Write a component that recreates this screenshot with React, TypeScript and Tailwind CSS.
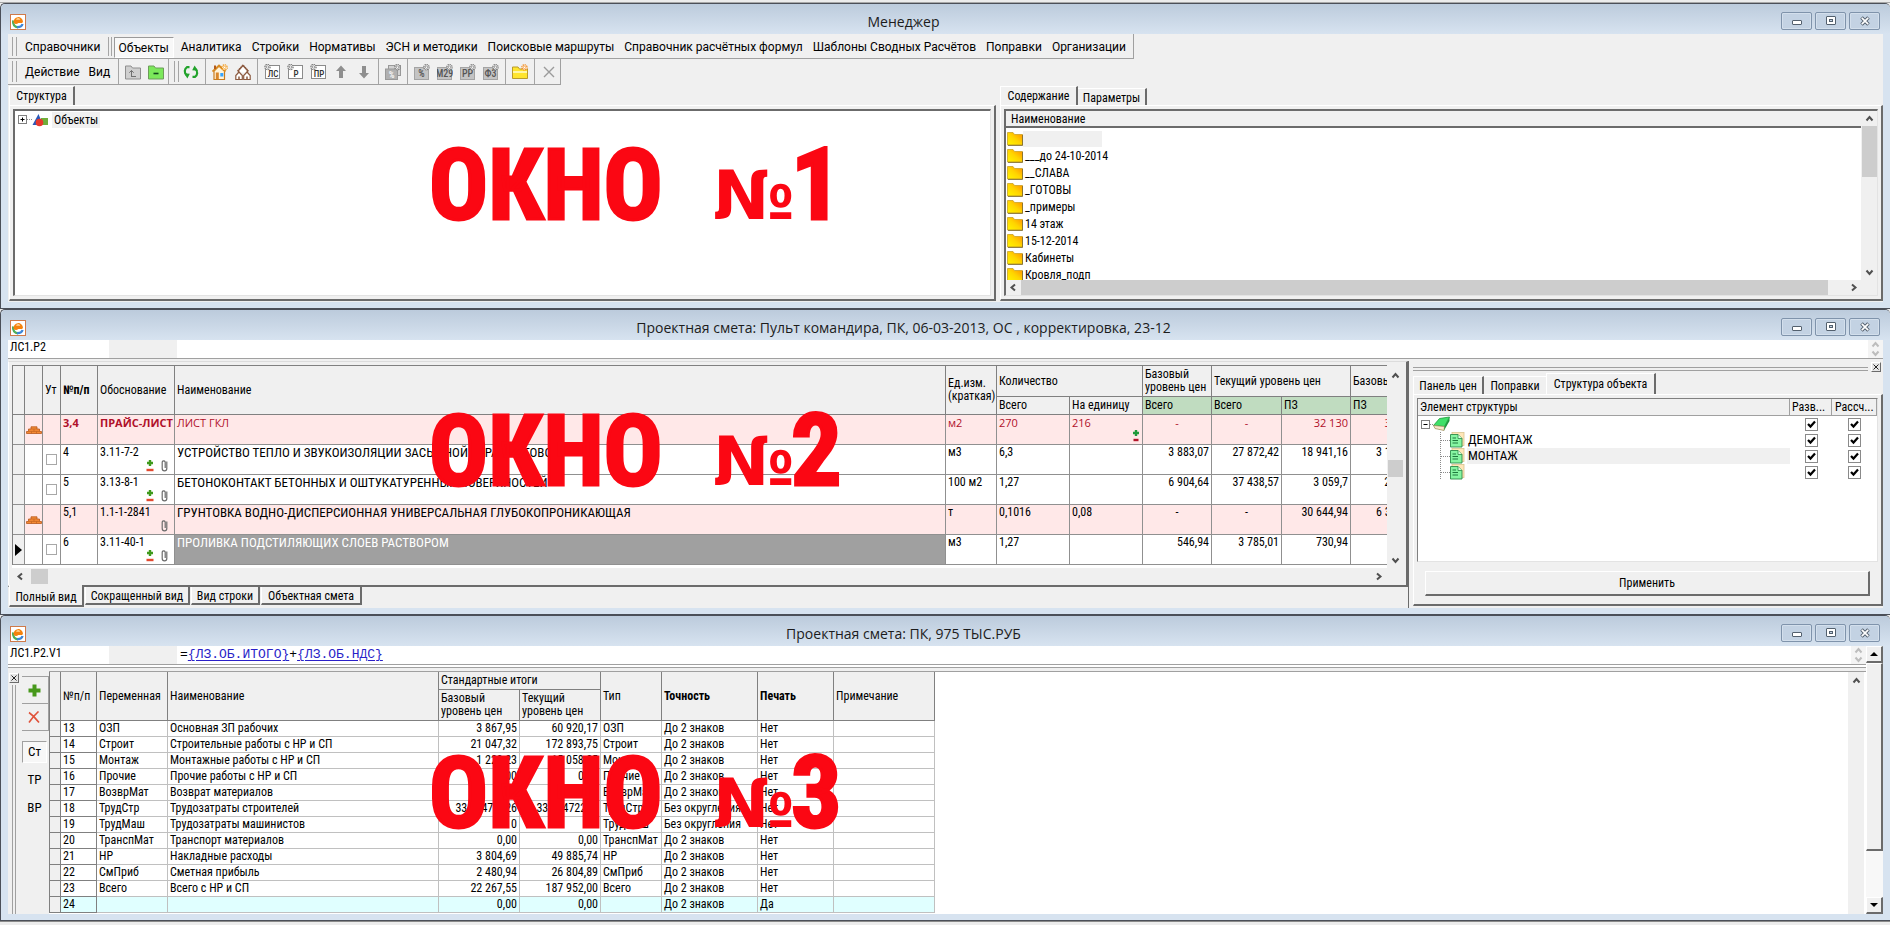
import React from "react";

/* ---------- shared helpers ---------- */

const UI = "font-['Roboto_Condensed',Roboto,'Liberation_Sans',sans-serif]";
const MENU = "font-[Roboto,'Open_Sans','Liberation_Sans',sans-serif]";
const sunken = "border border-[#808080] border-r-[#e3e3e3] border-b-[#e3e3e3]";

type Dir = "up" | "down" | "left" | "right";

function Chevron({ dir, color = "#505050" }: { dir: Dir; color?: string }) {
  const d = {
    up: "M1.5 6.5 L4.5 3 L7.5 6.5",
    down: "M1.5 2.5 L4.5 6 L7.5 2.5",
    left: "M6 1.5 L2.5 4.5 L6 7.5",
    right: "M3 1.5 L6.5 4.5 L3 7.5",
  }[dir];
  return (
    <svg width="9" height="9" viewBox="0 0 9 9" aria-hidden="true">
      <path d={d} fill="none" stroke={color} strokeWidth="2" />
    </svg>
  );
}

function ArrowButton({ dir, label }: { dir: Dir; label: string }) {
  return (
    <button aria-label={label} className="flex h-[15px] w-[15px] shrink-0 items-center justify-center bg-[#f0f0f0]">
      <Chevron dir={dir} />
    </button>
  );
}

function Gear({ x, y, color = "#777" }: { x: number; y: number; color?: string }) {
  return (
    <g>
      <circle cx={x} cy={y} r="2.6" fill="#fff" stroke={color} strokeWidth="1.3" strokeDasharray="1.3 0.7" />
      <circle cx={x} cy={y} r="1.2" fill="none" stroke={color} strokeWidth="0.7" />
    </g>
  );
}

/* ---------- window chrome ---------- */

function AppIcon() {
  return (
    <svg width="16" height="16" viewBox="0 0 16 16" aria-hidden="true" className="shrink-0">
      <rect x="0.5" y="0.5" width="15" height="15" fill="#fff" stroke="#cf7a4a" />
      <path d="M3.2 6.5 C2.6 10.5 4.6 13.2 8 13.2" fill="none" stroke="#4fae5b" strokeWidth="2.4" />
      <path d="M7 13.2 C10 13.4 12 12 12.6 10" fill="none" stroke="#3c86d8" strokeWidth="2.2" />
      <path d="M3.5 8.4 A4.7 4.7 0 1 1 13 7.4 L12.2 9 H8.4 A3.4 3.4 0 0 1 3.5 8.4 Z" fill="#f5820c" />
      <path d="M6 5.8 A2.2 2.2 0 0 1 10.3 5.8 Z" fill="#ffd79a" />
    </svg>
  );
}

function CaptionButton({ label, children }: { label: string; children: React.ReactNode }) {
  return (
    <button
      aria-label={label}
      className="flex h-[18px] w-[31px] items-center justify-center rounded-[2px] border border-[#7f93ab] bg-[#c3d2e3] shadow-[inset_0_0_0_1px_#d3dfec]"
    >
      <svg width="12" height="10" viewBox="0 0 12 10" aria-hidden="true">{children}</svg>
    </button>
  );
}

function Win({ title, mark, markTop, children }: { title: string; mark: string; markTop: string; children: React.ReactNode }) {
  return (
    <section className="relative flex flex-[1_1_0px] flex-col rounded-t-[5px] border-t border-b border-l border-[#4b4f58] bg-[#d7e3f0] pr-[7px] pb-[6px] pl-[7px]">
      <header className="-mx-[7px] flex h-[30px] shrink-0 items-center rounded-t-[5px] bg-linear-to-b from-[#bccbdc] to-[#d7e3f0] pt-[6px] pr-[10px] pl-[9px]">
        <AppIcon />
        <h1 className="flex-1 text-center font-['Open_Sans','Noto_Sans',sans-serif] text-[14px] leading-[20px] whitespace-nowrap text-[#1c1c1c]">{title}</h1>
        <div className="mb-[2px] flex gap-[3px]">
          <CaptionButton label="Свернуть">
            <rect x="1.5" y="4.5" width="9" height="4" rx="0.5" fill="#fff" stroke="#53606e" />
          </CaptionButton>
          <CaptionButton label="Развернуть">
            <rect x="1.5" y="0.5" width="9" height="8" rx="0.5" fill="#fff" stroke="#53606e" />
            <rect x="4.5" y="3.5" width="3" height="2" fill="#c3d2e3" stroke="#53606e" />
          </CaptionButton>
          <CaptionButton label="Закрыть">
            <path d="M2.5 1.5 L9.5 8.5 M9.5 1.5 L2.5 8.5" stroke="#53606e" strokeWidth="3.6" />
            <path d="M2.8 1.8 L9.2 8.2 M9.2 1.8 L2.8 8.2" stroke="#fff" strokeWidth="1.7" />
          </CaptionButton>
        </div>
      </header>
      <div className="flex min-h-0 flex-1 flex-col bg-[#f0f0f0]">{children}</div>
      <div
        className={`pointer-events-none absolute left-[428px] flex items-baseline leading-[100px] font-bold whitespace-nowrap text-[#fb0713] ${markTop}`}
      >
        <span className={`w-[284px] text-[98px] [-webkit-text-stroke:3px_#fb0713] ${UI}`}>ОКНО</span>
        <span className="w-[78px] font-['DejaVu_Sans',sans-serif] text-[68px]">№</span>
        <span className={`text-[100px] [-webkit-text-stroke:3px_#fb0713] ${UI}`}>{mark}</span>
      </div>
    </section>
  );
}

function Grip({ tight }: { tight?: boolean }) {
  return <span className={`my-[2px] ml-[4px] w-[5px] shrink-0 self-stretch border-x border-[#a5a5a5] ${tight ? "" : "mr-[4px]"}`} />;
}

function VLine({ tight }: { tight?: boolean }) {
  return <span className={`w-px shrink-0 self-stretch bg-[#a5a5a5] ${tight ? "mx-px" : "mr-[2px] ml-[3px]"}`} />;
}

/* ---------- window 1 ---------- */

const menu = ["Аналитика", "Стройки", "Нормативы", "ЭСН и методики", "Поисковые маршруты", "Справочник расчётных формул", "Шаблоны Сводных Расчётов", "Поправки", "Организации"];

function IconButton({ label, children }: { label: string; children: React.ReactNode }) {
  return (
    <button aria-label={label} className="flex h-[23px] w-[23px] shrink-0 items-center justify-center">
      <svg width="16" height="16" viewBox="0 0 16 16" aria-hidden="true">{children}</svg>
    </button>
  );
}

function DocIcon({ text }: { text: string }) {
  return (
    <g>
      <rect x="1.5" y="1.5" width="14" height="13" fill="#fff" stroke="#8b8b8b" />
      <text x="9" y="13" textAnchor="middle" fontSize="9" fontFamily="Roboto Condensed" fontWeight="500" fill="#333">{text}</text>
      <Gear x={3.5} y={3} />
    </g>
  );
}

function GrayIcon({ text }: { text: string }) {
  return (
    <g>
      <rect x="0.5" y="3.5" width="14" height="12" fill="#c4c4c4" stroke="#a4a4a4" />
      <text x="7.5" y="13" textAnchor="middle" fontSize="10" fontFamily="Roboto Condensed" fontWeight="500" fill="#555">{text}</text>
      <Gear x={12.5} y={3.2} />
    </g>
  );
}

function Folder() {
  return (
    <svg width="16" height="15" viewBox="0 0 16 15" aria-hidden="true" className="shrink-0">
      <defs>
        <linearGradient id="fold" x1="0" y1="1" x2="1" y2="0">
          <stop offset="0" stopColor="#fff600" />
          <stop offset="0.5" stopColor="#ffd400" />
          <stop offset="1" stopColor="#ff8a00" />
        </linearGradient>
      </defs>
      <path d="M0.5 14 V1.5 H6 L7.5 3.5 H15.5 V14 Z" fill="url(#fold)" stroke="#c9a227" strokeWidth="0.8" />
      <path d="M1 14.4 H15.6 V4" fill="none" stroke="#7d6a2c" strokeWidth="0.9" />
    </svg>
  );
}

const entries = ["", "___до 24-10-2014", "__СЛАВА", "_ГОТОВЫ", "_примеры", "14 этаж", "15-12-2014", "Кабинеты", "Кровля_подп"];

function Manager() {
  return (
    <>
      <nav className={`flex h-[25px] shrink-0 items-stretch self-start border-r border-b border-[#a0a0a0] pr-[2px] pt-px text-[12px] text-black ${MENU}`}>
        <Grip />
        <button className="mr-[7px] ml-[4px]">Справочники</button>
        <span className="my-[2px] w-[4px] border-x border-[#a5a5a5]" />
        <button className="mt-[2px] mr-[2px] ml-[2px] border border-[#9a9a9a] border-r-white border-b-white bg-[#f8f8f8] px-[4px]">Объекты</button>
        {menu.map((m) => (
          <button key={m} className="px-[5px] whitespace-nowrap">{m}</button>
        ))}
      </nav>
      <div className={`flex h-[26px] shrink-0 items-center self-start border-r border-b border-[#a0a0a0] text-[12px] text-black ${MENU}`}>
        <Grip />
        <button className="pr-[3px] pl-[4px]">Действие</button>
        <button className="pr-[5px] pl-[6px]">Вид</button>
        <VLine />
        <IconButton label="Вверх">
          <path d="M0.5 15 V2 H6 L7.5 4 H15.5 V15 Z" fill="#cfcfcf" stroke="#8f8f8f" />
          <path d="M6 12.5 H11 M6.5 12.5 V6.5 M4.3 8.7 L6.5 6.5 L8.7 8.7" fill="none" stroke="#6f6f6f" />
        </IconButton>
        <IconButton label="Свернуть папку">
          <path d="M0.5 15 V2 H6 L7.5 4 H15.5 V15 Z" fill="#7be85a" stroke="#6d9c5a" />
          <path d="M5.5 9.5 H10.5" stroke="#11451b" strokeWidth="1.6" />
        </IconButton>
        <VLine tight />
        <Grip tight />
        <IconButton label="Обновить">
          <path d="M6.5 3.2 H4 A5 5 0 0 0 3.4 11" fill="none" stroke="#22a32c" strokeWidth="2.2" />
          <path d="M1 9.2 L6.8 9.8 L4.4 14.4 Z" fill="#22a32c" />
          <path d="M9.5 12.8 H12 A5 5 0 0 0 12.6 5" fill="none" stroke="#22a32c" strokeWidth="2.2" />
          <path d="M15 6.8 L9.2 6.2 L11.6 1.6 Z" fill="#22a32c" />
        </IconButton>
        <VLine />
        <IconButton label="Новый объект">
          <path d="M2 15.5 V7 L7 2 L12.5 7 V15.5 Z" fill="#fff3d9" stroke="#c97b1d" strokeWidth="1.2" />
          <path d="M0.5 7.5 L7 1.5 L13.5 7.5" fill="none" stroke="#d88a22" strokeWidth="1.8" />
          <path d="M3 1.5 V5" stroke="#b35c1a" strokeWidth="2" />
          <rect x="3.8" y="8.5" width="3" height="6.5" fill="#d9862a" />
          <rect x="8.3" y="9" width="3" height="3.5" fill="#35a4ff" />
          <Gear x={12.6} y={3.4} color="#ef9618" />
        </IconButton>
        <IconButton label="Стройка">
          <path d="M3.5 8.5 V6.5 L8 1.5 L12.5 6.5 V8.5" fill="#fff" stroke="#8c5a40" strokeWidth="1.4" />
          <path d="M2.5 7 L8 1 L13.5 7" fill="none" stroke="#8c5a40" strokeWidth="1.2" strokeDasharray="1.5 0.7" />
          <path d="M0.8 15.5 V11.5 L4 8 L7.3 11.5 V15.5 Z M8.7 15.5 V11.5 L12 8 L15.2 11.5 V15.5 Z" fill="#fff" stroke="#8c5a40" strokeWidth="1.2" />
          <path d="M4 15 V12.5 M12 15 V12.5" stroke="#8c5a40" strokeWidth="1.5" />
        </IconButton>
        <VLine />
        <IconButton label="Локальная смета"><DocIcon text="ЛС" /></IconButton>
        <IconButton label="Раздел"><DocIcon text="Р" /></IconButton>
        <IconButton label="Подраздел"><DocIcon text="ПР" /></IconButton>
        <IconButton label="Поднять">
          <path d="M8 1.5 L13 7 H10 V14 H6 V7 H3 Z" fill="#8f8f8f" />
        </IconButton>
        <IconButton label="Опустить">
          <path d="M8 14.5 L13 9 H10 V2 H6 V9 H3 Z" fill="#8f8f8f" />
        </IconButton>
        <VLine />
        <IconButton label="Набор процентов">
          <rect x="3.5" y="1.5" width="12" height="10" fill="#d2d2d2" stroke="#999" />
          <rect x="0.5" y="5" width="12" height="10.5" fill="#b0b0b0" stroke="#999" />
          <text x="6.5" y="13.5" textAnchor="middle" fontSize="9" fontFamily="Roboto Condensed" fontWeight="700" fill="#f5f5f5">%</text>
          <Gear x={12.5} y={3.2} />
        </IconButton>
        <VLine />
        <IconButton label="Проценты"><GrayIcon text="%" /></IconButton>
        <IconButton label="М29"><GrayIcon text="М29" /></IconButton>
        <IconButton label="РР"><GrayIcon text="РР" /></IconButton>
        <IconButton label="Ф3"><GrayIcon text="Ф3" /></IconButton>
        <VLine />
        <IconButton label="Новая папка">
          <path d="M0.5 14.5 V3 H6 L7.5 5 H15.5 V14.5 Z" fill="#ffe52e" stroke="#b99b2a" />
          <path d="M1 8 H15" stroke="#fff7a8" strokeWidth="2" />
          <Gear x={12.5} y={3.4} color="#ef8618" />
        </IconButton>
        <VLine />
        <IconButton label="Удалить">
          <path d="M3 3 L13 13 M13 3 L3 13" stroke="#9b9b9b" strokeWidth="1.4" />
        </IconButton>
      </div>
      <div className={`flex min-h-0 flex-1 gap-[4px] pt-px pb-px text-[12px] text-black ${UI}`}>
        {/* structure pane */}
        <div className="ml-px flex min-w-0 flex-[987_1_0px] flex-col">
          <div role="tablist" className="flex h-[19px] items-end">
            <button role="tab" aria-selected="true" className="h-[19px] w-[66px] border-t border-r-2 border-l border-t-white border-r-[#6b6b6b] border-l-white">Структура</button>
          </div>
          <div className="flex flex-1 flex-col border-t border-r-2 border-b-2 border-l border-t-white border-r-[#6b6b6b] border-b-[#6b6b6b] border-l-white p-[3px]">
            <div className="flex flex-1 items-start border-t-2 border-r border-b border-l-2 border-t-[#6b6b6b] border-r-[#e3e3e3] border-b-[#e3e3e3] border-l-[#6b6b6b] bg-white pl-[3px]">
              <div className="flex h-[17px] items-center">
                <svg width="30" height="18" viewBox="0 0 30 18" aria-hidden="true">
                  <rect x="0.5" y="4.5" width="8" height="8" fill="#fff" stroke="#808080" />
                  <path d="M2.5 8.5 H6.5 M4.5 6.5 V10.5" stroke="#000" />
                  <path d="M9 8.5 H15" stroke="#909090" strokeDasharray="1 1" />
                  <path d="M14.5 14 L20.5 3 L25 14 Z" fill="#2b58b8" />
                  <rect x="23" y="7" width="7" height="7" fill="#6fae3a" />
                  <circle cx="21.5" cy="11.5" r="3.8" fill="#e8372c" />
                </svg>
                <span className="ml-[4px] bg-[#f0f0f0] px-[2px] leading-[16px]">Объекты</span>
              </div>
            </div>
          </div>
        </div>
        {/* contents pane */}
        <div className="flex min-w-0 flex-[883_1_0px] flex-col">
          <div role="tablist" className="flex h-[19px] items-end">
            <button role="tab" aria-selected="true" className="h-[19px] w-[78px] border-t border-r-2 border-l border-t-white border-r-[#6b6b6b] border-l-white">Содержание</button>
            <button role="tab" aria-selected="false" className="h-[17px] w-[69px] border-t border-r-2 border-t-white border-r-[#6b6b6b]">Параметры</button>
          </div>
          <div className="flex min-h-0 flex-1 flex-col border-t border-r-2 border-b-2 border-l border-t-white border-r-[#6b6b6b] border-b-[#6b6b6b] border-l-white p-[3px]">
            <div className="grid min-h-0 flex-1 grid-cols-[1fr_16px] grid-rows-[1fr_15px] border-t-2 border-r border-b border-l-2 border-t-[#6b6b6b] border-r-[#e3e3e3] border-b-[#e3e3e3] border-l-[#6b6b6b] bg-white">
              <div className="flex h-0 min-h-full flex-col overflow-hidden">
                <div className="h-[17px] shrink-0 border-b-2 border-[#6b6b6b] bg-[#f0f0f0] pl-[5px] leading-[16px]">Наименование</div>
                <ul className="pt-[2px] pl-px">
                  {entries.map((e, i) => (
                    <li key={i} className="flex h-[17px] items-center">
                      <Folder />
                      {e ? <span className="pl-[2px]">{e}</span> : <span className="h-[16px] w-[79px] bg-[#f0f0f0]" />}
                    </li>
                  ))}
                </ul>
              </div>
              <div className="flex flex-col items-center bg-[#f0f0f0]">
                <ArrowButton dir="up" label="Прокрутить вверх" />
                <span className="h-[51px] w-[15px] bg-[#cdcdcd]" />
                <span className="flex-1" />
                <ArrowButton dir="down" label="Прокрутить вниз" />
              </div>
              <div className="flex items-center bg-[#f0f0f0]">
                <ArrowButton dir="left" label="Прокрутить влево" />
                <span className="h-[15px] flex-1 bg-[#cdcdcd]" />
                <span className="w-[18px]" />
                <ArrowButton dir="right" label="Прокрутить вправо" />
              </div>
              <div className="bg-[#f0f0f0]" />
            </div>
          </div>
        </div>
      </div>
    </>
  );
}

/* ---------- window 2 ---------- */

function PlusMinus({ dark }: { dark?: boolean }) {
  return (
    <svg width="8" height="13" viewBox="0 0 8 13" aria-hidden="true">
      <path d="M4 1 V7 M1 4 H7" stroke={dark ? "#1f9a3a" : "#3f9a1c"} strokeWidth="2.4" />
      <path d={dark ? "M1.5 11 H6.5" : "M0.5 11 H7.5"} stroke={dark ? "#b3162b" : "#e2492f"} strokeWidth="2.4" />
    </svg>
  );
}

function Clip() {
  return (
    <svg width="7" height="13" viewBox="0 0 7 13" aria-hidden="true">
      <path d="M5.8 2.5 V9.5 A2.2 2.2 0 0 1 1.2 9.5 V3 A1.6 1.6 0 0 1 4.2 3 V9" fill="none" stroke="#6b6b6b" strokeWidth="1.2" />
    </svg>
  );
}

function Bricks() {
  return (
    <svg width="16" height="8" viewBox="0 0 16 8" aria-hidden="true" className="mx-auto">
      <path d="M0.5 7.5 V5.5 H2.5 V3 H5 V0.8 H11 V3 H13.5 V5.5 H15.5 V7.5 Z" fill="#f58a34" stroke="#b8581c" strokeWidth="0.8" />
      <path d="M2.5 5.4 H13.5 M5 3 H11 M5.5 7.5 V5.5 M10.5 7.5 V5.5 M8 5.4 V3" stroke="#c2611f" strokeWidth="0.7" />
    </svg>
  );
}

type Row = {
  n: string; code: string; name: string; unit: string; qty: string; per: string;
  base: string; cur: string; pz: string; tail: string;
  pink?: boolean; red?: boolean; active?: boolean;
};

const rows: Row[] = [
  { n: "3,4", code: "ПРАЙС-ЛИСТ", name: "ЛИСТ ГКЛ", unit: "м2", qty: "270", per: "216", base: "-", cur: "-", pz: "32 130", tail: "   3", pink: true, red: true },
  { n: "4", code: "3.11-7-2", name: "УСТРОЙСТВО ТЕПЛО И ЗВУКОИЗОЛЯЦИИ ЗАСЫПНОЙ КЕРАМЗИТОВОЙ", unit: "м3", qty: "6,3", per: "", base: "3 883,07", cur: "27 872,42", pz: "18 941,16", tail: "3 1" },
  { n: "5", code: "3.13-8-1", name: "БЕТОНОКОНТАКТ БЕТОННЫХ И ОШТУКАТУРЕННЫХ ПОВЕРХНОСТЕЙ", unit: "100 м2", qty: "1,27", per: "", base: "6 904,64", cur: "37 438,57", pz: "3 059,7", tail: "   2" },
  { n: "5,1", code: "1.1-1-2841", name: "ГРУНТОВКА ВОДНО-ДИСПЕРСИОННАЯ УНИВЕРСАЛЬНАЯ ГЛУБОКОПРОНИКАЮЩАЯ", unit: "т", qty: "0,1016", per: "0,08", base: "-", cur: "-", pz: "30 644,94", tail: "6 3", pink: true },
  { n: "6", code: "3.11-40-1", name: "ПРОЛИВКА ПОДСТИЛЯЮЩИХ СЛОЕВ РАСТВОРОМ", unit: "м3", qty: "1,27", per: "", base: "546,94", cur: "3 785,01", pz: "730,94", tail: "", active: true },
];

const th = "border-r border-b border-[#808080] bg-[#f0f0f0] px-[2px] text-left font-normal leading-[13px] align-middle overflow-hidden whitespace-nowrap";
const green = "border-r border-b border-[#808080] bg-[#c0dcc0] px-[2px] text-left font-normal leading-[13px] overflow-hidden whitespace-nowrap";

function EstimateTable() {
  return (
    <table className="w-full table-fixed border-separate border-spacing-0 border-t border-l border-[#808080]">
      <colgroup>
        <col className="w-[12px]" /><col className="w-[18px]" /><col className="w-[18px]" /><col className="w-[37px]" /><col className="w-[77px]" />
        <col />
        <col className="w-[51px]" /><col className="w-[73px]" /><col className="w-[73px]" /><col className="w-[69px]" /><col className="w-[70px]" /><col className="w-[69px]" /><col className="w-[36px]" />
      </colgroup>
      <thead>
        <tr className="h-[31px]">
          <th rowSpan={2} className={th} /><th rowSpan={2} className={th} />
          <th rowSpan={2} className={th}>Ут</th>
          <th rowSpan={2} className={`${th} !font-bold`}>№п/п</th>
          <th rowSpan={2} className={th}>Обоснование</th>
          <th rowSpan={2} className={th}>Наименование</th>
          <th rowSpan={2} className={th}>Ед.изм.<br />(краткая)</th>
          <th colSpan={2} className={th}>Количество</th>
          <th className={th}>Базовый<br />уровень цен</th>
          <th colSpan={2} className={th}>Текущий уровень цен</th>
          <th className={`${th} border-r-0`}>Базовый</th>
        </tr>
        <tr className="h-[18px]">
          <th className={th}>Всего</th><th className={th}>На единицу</th>
          <th className={green}>Всего</th><th className={green}>Всего</th><th className={green}>ПЗ</th>
          <th className={`${green} border-r-0`}>ПЗ</th>
        </tr>
      </thead>
      <tbody>
        {rows.map((r) => {
          const font = r.red ? "font-['Open_Sans','Noto_Sans',sans-serif] text-[11px] text-[#b0102a]" : "text-black";
          const cell = `h-[30px] border-r border-b border-[#909090] px-[2px] align-top leading-[15px] overflow-hidden whitespace-nowrap ${r.pink ? "bg-[#ffe8e8]" : "bg-white"} ${font}`;
          const num = `${cell} ${r.base === "-" ? "text-center" : "text-right"}`;
          return (
            <tr key={r.n}>
              <td className="border-r border-b border-[#909090] bg-[#f0f0f0] align-middle">
                {r.active && (
                  <svg width="7" height="12" viewBox="0 0 7 12" aria-hidden="true" className="ml-[2px]"><path d="M0 0 L7 6 L0 12 Z" fill="#000" /></svg>
                )}
              </td>
              <td className={`border-r border-b border-[#909090] align-middle ${r.pink ? "bg-[#ffe8e8]" : "bg-white"}`}>{r.pink && <Bricks />}</td>
              <td className={`border-r border-b border-[#909090] text-center align-middle ${r.pink ? "bg-[#ffe8e8]" : "bg-white"}`}>
                {!r.pink && <input type="checkbox" aria-label={`Утверждено, строка ${r.n}`} className="mx-auto block h-[11px] w-[11px] appearance-none border border-[#a8a8a8] bg-white" />}
              </td>
              <td className={`${cell} ${r.red ? "font-bold" : ""}`}>{r.n}</td>
              <td className={`${cell} ${r.red ? "font-bold" : ""}`}>
                <div className="flex h-[27px] justify-between">
                  <span>{r.code}</span>
                  {!r.red && (
                    <span className="flex gap-[7px] self-end pr-[4px]">
                      {!r.pink && <PlusMinus />}
                      <Clip />
                    </span>
                  )}
                </div>
              </td>
              <td className={r.active ? "border-r border-b border-[#909090] bg-[#a0a0a0] px-[2px] align-top text-[13px] leading-[15px] text-white whitespace-nowrap" : `${cell} ${r.red ? "" : "text-[13px]"}`}>{r.name}</td>
              <td className={cell}>{r.unit}</td>
              <td className={cell}>{r.qty}</td>
              <td className={cell}>
                <div className="flex h-[27px] justify-between">
                  <span>{r.per}</span>
                  {r.red && <span className="self-end"><PlusMinus dark /></span>}
                </div>
              </td>
              <td className={num}>{r.base}</td>
              <td className={num}>{r.cur}</td>
              <td className={`${cell} text-right`}>{r.pz}</td>
              <td className={`${cell} border-r-0 !pl-[25px] !whitespace-pre`}>{r.tail}</td>
            </tr>
          );
        })}
      </tbody>
    </table>
  );
}

function ClassicClose({ label }: { label: string }) {
  return (
    <button aria-label={label} className="flex h-[10px] w-[10px] shrink-0 items-center justify-center border border-white border-r-[#6b6b6b] border-b-[#6b6b6b] bg-[#e6e6e6]">
      <svg width="6" height="6" viewBox="0 0 6 6" aria-hidden="true"><path d="M0.5 0.5 L5.5 5.5 M5.5 0.5 L0.5 5.5" stroke="#222" /></svg>
    </button>
  );
}

function Spinner() {
  return (
    <div className="flex w-[15px] flex-col items-center justify-between bg-[#f4f4f4]">
      <Chevron dir="up" color="#bdbdbd" />
      <Chevron dir="down" color="#bdbdbd" />
    </div>
  );
}

function FormulaBar({ name, children }: { name: string; children?: React.ReactNode }) {
  return (
    <div className={`flex h-[19px] shrink-0 border-b border-[#a0a0a0] bg-white text-[12px] leading-[14px] text-black ${UI}`}>
      <span className="w-[101px] pl-[2px]">{name}</span>
      <span className="w-[68px] bg-[#f0f0f0]" />
      <span className="flex-1 pl-[3px]">{children}</span>
      <Spinner />
    </div>
  );
}

function Check({ label }: { label: string }) {
  return (
    <span className="relative mx-auto block h-[13px] w-[13px]">
      <input type="checkbox" defaultChecked aria-label={label} className="peer block h-[13px] w-[13px] appearance-none border border-[#8a8a8a] bg-white" />
      <svg width="13" height="13" viewBox="0 0 13 13" aria-hidden="true" className="pointer-events-none absolute inset-0 hidden peer-checked:block">
        <path d="M3 6 L5.5 8.6 L10 3.6" fill="none" stroke="#000" strokeWidth="2.2" />
      </svg>
    </span>
  );
}

function DocNode() {
  return (
    <svg width="36" height="16" viewBox="0 0 36 16" aria-hidden="true" className="ml-[20px] shrink-0">
      <path d="M2.5 0 V16" stroke="#8a8a8a" strokeDasharray="1 1" />
      <path d="M3 8.5 H12" stroke="#8a8a8a" strokeDasharray="1 1" />
      <rect x="14" y="0.5" width="12" height="13" fill="#ffe6b8" stroke="#d9c48f" strokeWidth="0.8" />
      <path d="M12.5 2.5 H20 L24 6.5 V15 H12.5 Z" fill="#86f5a2" stroke="#2d8a4a" strokeWidth="0.9" />
      <path d="M20 2.5 V6.5 H24" fill="#d8ffe2" stroke="#2d8a4a" strokeWidth="0.8" />
      <path d="M14.5 6 H18 M14.5 8.5 H20 M14.5 11 H20" stroke="#1f7a3e" />
    </svg>
  );
}

const bottomTabs: [string, string][] = [
  ["Сокращенный вид", "w-[105px]"],
  ["Вид строки", "w-[69px]"],
  ["Объектная смета", "w-[101px]"],
];

function Estimate() {
  const nodes = ["", "ДЕМОНТАЖ", "МОНТАЖ", ""];
  return (
    <>
      <FormulaBar name="ЛС1.Р2" />
      <div className={`flex min-h-0 flex-1 pt-[2px] text-[12px] text-black ${UI}`}>
        <div className="flex min-w-0 flex-1 flex-col">
          <div className="flex flex-1 flex-col border-t border-r-2 border-b-2 border-l border-t-[#dcdcdc] border-r-[#6b6b6b] border-b-[#6b6b6b] border-l-white bg-[#f0f0f0] pt-[3px] pr-[3px] pb-px pl-[3px]">
            <div className="flex flex-1 bg-white">
              <div className="min-w-0 flex-1"><EstimateTable /></div>
              <div className="flex w-[16px] flex-col items-center bg-[#f0f0f0] pt-[3px]">
                <ArrowButton dir="up" label="Прокрутить вверх" />
                <span className="flex-[75_1_0px]" />
                <span className="h-[17px] w-[15px] bg-[#cdcdcd]" />
                <span className="flex-[75_1_0px]" />
                <ArrowButton dir="down" label="Прокрутить вниз" />
              </div>
            </div>
            <div className="flex h-[16px] shrink-0 items-center">
              <span className="mr-[3px] ml-px"><ArrowButton dir="left" label="Прокрутить влево" /></span>
              <span className="h-[15px] w-[17px] bg-[#cdcdcd]" />
              <span className="flex-1" />
              <span className="mr-[17px]"><ArrowButton dir="right" label="Прокрутить вправо" /></span>
            </div>
          </div>
          <div role="tablist" className="flex h-[21px] shrink-0 items-start gap-px pl-px">
            <button role="tab" aria-selected="true" className="-mt-[2px] h-[22px] w-[75px] border-r-2 border-b-2 border-l border-r-[#6b6b6b] border-b-[#6b6b6b] border-l-white bg-[#f0f0f0] pt-[3px]">Полный вид</button>
            {bottomTabs.map(([t, w]) => (
              <button key={t} role="tab" aria-selected="false" className={`h-[18px] border-r-2 border-b-2 border-l border-r-[#6b6b6b] border-b-[#6b6b6b] border-l-white ${w}`}>{t}</button>
            ))}
          </div>
        </div>
        <div className="flex w-[475px] shrink-0 flex-col border-l border-[#6b6b6b] pl-[4px]">
          <div className="flex h-[12px] shrink-0 items-center pr-[2px]">
            <span className="mt-[4px] mr-[3px] h-[4px] flex-1 border-y border-[#a0a0a0]" />
            <ClassicClose label="Закрыть панель" />
          </div>
          <div role="tablist" className="flex h-[21px] shrink-0 items-end">
            <button role="tab" aria-selected="false" className="h-[18px] w-[71px] border-t border-r-2 border-l border-t-white border-r-[#6b6b6b] border-l-white">Панель цен</button>
            <button role="tab" aria-selected="false" className="h-[18px] w-[62px] border-t border-t-white">Поправки</button>
            <button role="tab" aria-selected="true" className="h-[21px] w-[110px] border-t border-r-2 border-l border-t-white border-r-[#6b6b6b] border-l-white">Структура объекта</button>
          </div>
          <div className="mb-[2px] flex flex-1 flex-col border-t border-r-2 border-b-2 border-l border-t-white border-r-[#6b6b6b] border-b-[#6b6b6b] border-l-white pt-[3px] pr-[3px] pl-[3px]">
            <div className={`flex-1 bg-white ${sunken}`}>
              <table className="w-full table-fixed border-separate border-spacing-0">
                <colgroup><col /><col className="w-[42px]" /><col className="w-[45px]" /></colgroup>
                <thead>
                  <tr className="h-[17px] bg-[#f0f0f0] leading-[14px]">
                    <th className="border-r border-b border-[#a0a0a0] px-[2px] text-left font-normal">Элемент структуры</th>
                    <th className="border-r border-b border-[#a0a0a0] px-[2px] text-left font-normal">Разв...</th>
                    <th className="border-r border-b border-[#a0a0a0] px-[3px] text-left font-normal">Рассч...</th>
                  </tr>
                </thead>
                <tbody>
                  {nodes.map((n, i) => (
                    <tr key={i} className="h-[16px]">
                      <td className="p-0">
                        <div className="flex h-[16px] items-center">
                          {i === 0 ? (
                            <svg width="34" height="16" viewBox="0 0 34 16" aria-hidden="true" className="ml-[3px]">
                              <rect x="0.5" y="4.5" width="8" height="8" fill="#fff" stroke="#808080" />
                              <path d="M2.5 8.5 H6.5" stroke="#000" />
                              <path d="M9 8.5 H13" stroke="#8a8a8a" strokeDasharray="1 1" />
                              <path d="M18.5 2.5 L28.5 1 L23.5 10.5 L12.5 9.5 Z" fill="#3fe068" stroke="#1d9a3b" strokeWidth="0.8" />
                              <path d="M12.5 9.5 L23.5 10.5 L23 14.5 L14 12.5 Z" fill="#f8e6cb" stroke="#9a8a55" strokeWidth="0.7" />
                              <path d="M28.5 1 L28.5 5 L23 14.5 L23.5 10.5 Z" fill="#1c9a3d" />
                            </svg>
                          ) : (
                            <>
                              <DocNode />
                              <span className={`-ml-[7px] h-[16px] flex-1 pl-px text-[13px] leading-[16px] ${i === 2 ? "bg-[#f0f0f0]" : ""}`}>{n}</span>
                            </>
                          )}
                        </div>
                      </td>
                      <td className="p-0"><Check label={`Развернуть ${i + 1}`} /></td>
                      <td className="p-0"><Check label={`Рассчитать ${i + 1}`} /></td>
                    </tr>
                  ))}
                </tbody>
              </table>
            </div>
            <button className="mx-[8px] mt-[9px] mb-[8px] h-[25px] shrink-0 border-t border-r-2 border-b-2 border-l border-t-white border-r-[#6b6b6b] border-b-[#6b6b6b] border-l-white bg-[#f0f0f0]">Применить</button>
          </div>
        </div>
      </div>
    </>
  );
}

/* ---------- window 3 ---------- */

const totals: string[][] = [
  ["13", "ОЗП", "Основная ЗП рабочих", "3 867,95", "60 920,17", "ОЗП", "До 2 знаков", "Нет"],
  ["14", "Строит", "Строительные работы с НР и СП", "21 047,32", "172 893,75", "Строит", "До 2 знаков", "Нет"],
  ["15", "Монтаж", "Монтажные работы с НР и СП", "1 220,23", "15 058,25", "Монтаж", "До 2 знаков", "Нет"],
  ["16", "Прочие", "Прочие работы с НР и СП", "0,00", "0,00", "Прочие", "До 2 знаков", "Нет"],
  ["17", "ВозврМат", "Возврат материалов", "0,00", "0,00", "ВозврМат", "До 2 знаков", "Нет"],
  ["18", "ТрудСтр", "Трудозатраты строителей", "335,6472226", "335,6472226", "ТрудСтр", "Без округления", "Нет"],
  ["19", "ТрудМаш", "Трудозатраты машинистов", "0", "0", "ТрудМаш", "Без округления", "Нет"],
  ["20", "ТранспМат", "Транспорт материалов", "0,00", "0,00", "ТранспМат", "До 2 знаков", "Нет"],
  ["21", "НР", "Накладные расходы", "3 804,69", "49 885,74", "НР", "До 2 знаков", "Нет"],
  ["22", "СмПриб", "Сметная прибыль", "2 480,94", "26 804,89", "СмПриб", "До 2 знаков", "Нет"],
  ["23", "Всего", "Всего с НР и СП", "22 267,55", "187 952,00", "Всего", "До 2 знаков", "Нет"],
  ["24", "", "", "0,00", "0,00", "", "До 2 знаков", "Да"],
];

function TotalsTable() {
  return (
    <table className="w-[886px] table-fixed self-start border-separate border-spacing-0 border-l border-[#808080]">
      <colgroup>
        <col className="w-[11px]" /><col className="w-[36px]" /><col className="w-[71px]" /><col className="w-[271px]" /><col className="w-[81px]" /><col className="w-[81px]" />
        <col className="w-[61px]" /><col className="w-[96px]" /><col className="w-[76px]" /><col className="w-[101px]" />
      </colgroup>
      <thead>
        <tr className="h-[18px]">
          <th rowSpan={2} className={th} />
          <th rowSpan={2} className={th}>№п/п</th>
          <th rowSpan={2} className={th}>Переменная</th>
          <th rowSpan={2} className={th}>Наименование</th>
          <th colSpan={2} className={th}>Стандартные итоги</th>
          <th rowSpan={2} className={th}>Тип</th>
          <th rowSpan={2} className={`${th} !font-bold`}>Точность</th>
          <th rowSpan={2} className={`${th} !font-bold`}>Печать</th>
          <th rowSpan={2} className={th}>Примечание</th>
        </tr>
        <tr className="h-[31px]">
          <th className={th}>Базовый<br />уровень цен</th>
          <th className={th}>Текущий<br />уровень цен</th>
        </tr>
      </thead>
      <tbody>
        {totals.map((r, i) => (
          <tr key={r[0]} className={i === 11 ? "bg-[#e0ffff]" : "bg-white"}>
            <td className="h-[16px] border-r border-b border-[#808080] bg-[#f0f0f0] p-0" />
            {[...r, ""].map((c, k) => (
              <td
                key={k}
                className={`h-[16px] overflow-hidden border-r border-b px-[2px] py-0 leading-[15px] whitespace-nowrap ${k === 0 ? "border-[#808080]" : "border-[#c0c0c0]"} ${k === 3 || k === 4 ? "text-right" : ""}`}
              >
                {c}
              </td>
            ))}
          </tr>
        ))}
      </tbody>
    </table>
  );
}

function Totals() {
  return (
    <div className={`flex min-h-0 flex-1 text-[12px] text-black ${UI}`}>
      <div className="flex min-w-0 flex-1 flex-col">
        <FormulaBar name="ЛС1.Р2.V1">
          <span className="inline-block font-['Liberation_Mono',monospace] text-[13px] leading-[17px]">
            =<a href="#itogo" className="text-[#2a1fc8] underline underline-offset-2">{"{ЛЗ.ОБ.ИТОГО}"}</a>+<a href="#nds" className="text-[#2a1fc8] underline underline-offset-2">{"{ЛЗ.ОБ.НДС}"}</a>
          </span>
        </FormulaBar>
        <div className="h-[3px] shrink-0 border-b border-[#a0a0a0] bg-white" />
        <div className="flex flex-1 bg-[#f0f0f0] pt-[3px]">
          <div className="flex w-[12px] shrink-0 flex-col items-center gap-[2px] pt-[2px]">
            <ClassicClose label="Закрыть панель" />
            <span className="w-[4px] flex-1 border-x border-[#a0a0a0]" />
          </div>
          <div className="flex w-[29px] shrink-0 flex-col items-stretch pt-[5px] pl-[2px]">
            <div className="flex flex-col border-t border-r border-[#a0a0a0]">
              <button aria-label="Добавить" className="flex h-[27px] items-center justify-center border-b border-[#a0a0a0] pr-[2px]">
                <svg width="13" height="13" viewBox="0 0 13 13" aria-hidden="true"><path d="M6.5 0.5 V12.5 M0.5 6.5 H12.5" stroke="#47981b" strokeWidth="4" /></svg>
              </button>
              <button aria-label="Удалить" className="flex h-[27px] items-center justify-center border-b border-[#a0a0a0] pr-[2px]">
                <svg width="12" height="12" viewBox="0 0 12 12" aria-hidden="true"><path d="M1 1.5 Q6 5 11 11.5 M10.5 0.5 Q5 5.5 1 11.5" fill="none" stroke="#e0523a" strokeWidth="1.6" /></svg>
              </button>
            </div>
            <button className="mt-[10px] mr-[2px] h-[22px] border border-[#a0a0a0] border-r-white border-b-white bg-[#f7f7f7] text-[13px]">Ст</button>
            <button className="mt-[6px] mr-[2px] h-[22px] text-[13px]">ТР</button>
            <button className="mt-[6px] mr-[2px] h-[22px] text-[13px]">ВР</button>
          </div>
          <div className="flex flex-1 border-t border-[#a0a0a0] bg-white">
            <TotalsTable />
            <span className="flex-1" />
            <div className="mr-[2px] flex w-[16px] justify-center bg-[#f0f0f0] pt-px">
              <ArrowButton dir="up" label="Прокрутить таблицу вверх" />
            </div>
          </div>
        </div>
      </div>
      <div className="flex w-[17px] shrink-0 flex-col bg-[#f8f8f8]">
        <button aria-label="Прокрутить окно вверх" className="flex h-[17px] items-center justify-center border border-r-2 border-b-2 border-white border-r-[#6b6b6b] border-b-[#6b6b6b] bg-[#f0f0f0]">
          <svg width="8" height="4" viewBox="0 0 8 4" aria-hidden="true"><path d="M0 4 L4 0 L8 4 Z" /></svg>
        </button>
        <span className="h-[188px] border border-r-2 border-b-2 border-white border-r-[#6b6b6b] border-b-[#6b6b6b] bg-[#f0f0f0]" />
        <span className="flex-1" />
        <button aria-label="Прокрутить окно вниз" className="flex h-[17px] items-center justify-center border border-r-2 border-b-2 border-white border-r-[#6b6b6b] border-b-[#6b6b6b] bg-[#f0f0f0]">
          <svg width="8" height="4" viewBox="0 0 8 4" aria-hidden="true"><path d="M0 0 L4 4 L8 0 Z" /></svg>
        </button>
      </div>
    </div>
  );
}

export default function App() {
  return (
    <main className="flex min-h-screen flex-col bg-[#ececec]">
      <div className="h-[3px] shrink-0 border-b border-[#a8a8a8]" />
      <Win title="Менеджер" mark="1" markTop="top-[131px]"><Manager /></Win>
      <Win title="Проектная смета: Пульт командира, ПК, 06-03-2013, ОС , корректировка, 23-12" mark="2" markTop="top-[91px]"><Estimate /></Win>
      <Win title="Проектная смета: ПК, 975 ТЫС.РУБ" mark="3" markTop="top-[127px]"><Totals /></Win>
      <div className="h-[4px] shrink-0 border-t border-[#8a8a8a]" />
    </main>
  );
}
